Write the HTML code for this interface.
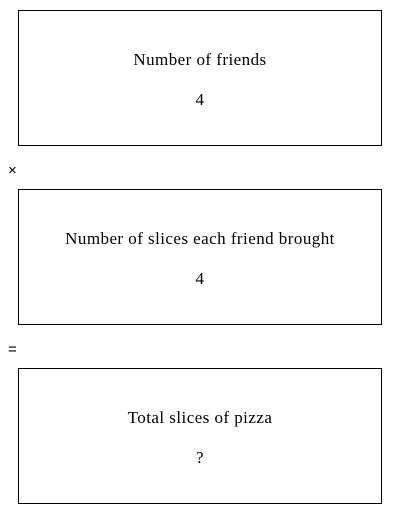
<!DOCTYPE html>
<html><head><style>
body{margin:0;width:400px;height:514px;background:#fff;position:relative;font-family:"Liberation Serif",serif;color:#000}
.box{position:absolute;left:18px;width:362px;height:134px;border:1px solid #000}
.t{position:absolute;left:0;right:0;text-align:center;font-size:17px;line-height:20px;letter-spacing:0.45px}
.op{position:absolute;left:8px;font-family:"Liberation Sans",sans-serif;font-size:15px;line-height:16px}
</style></head><body>
<div class="box" style="top:10px"><div class="t" style="top:39px">Number of friends</div><div class="t" style="top:79px">4</div></div>
<div class="op" style="top:163px">×</div>
<div class="box" style="top:189px"><div class="t" style="top:39px">Number of slices each friend brought</div><div class="t" style="top:79px">4</div></div>
<div class="op" style="top:342px">=</div>
<div class="box" style="top:368px"><div class="t" style="top:39px">Total slices of pizza</div><div class="t" style="top:79px">?</div></div>
</body></html>
